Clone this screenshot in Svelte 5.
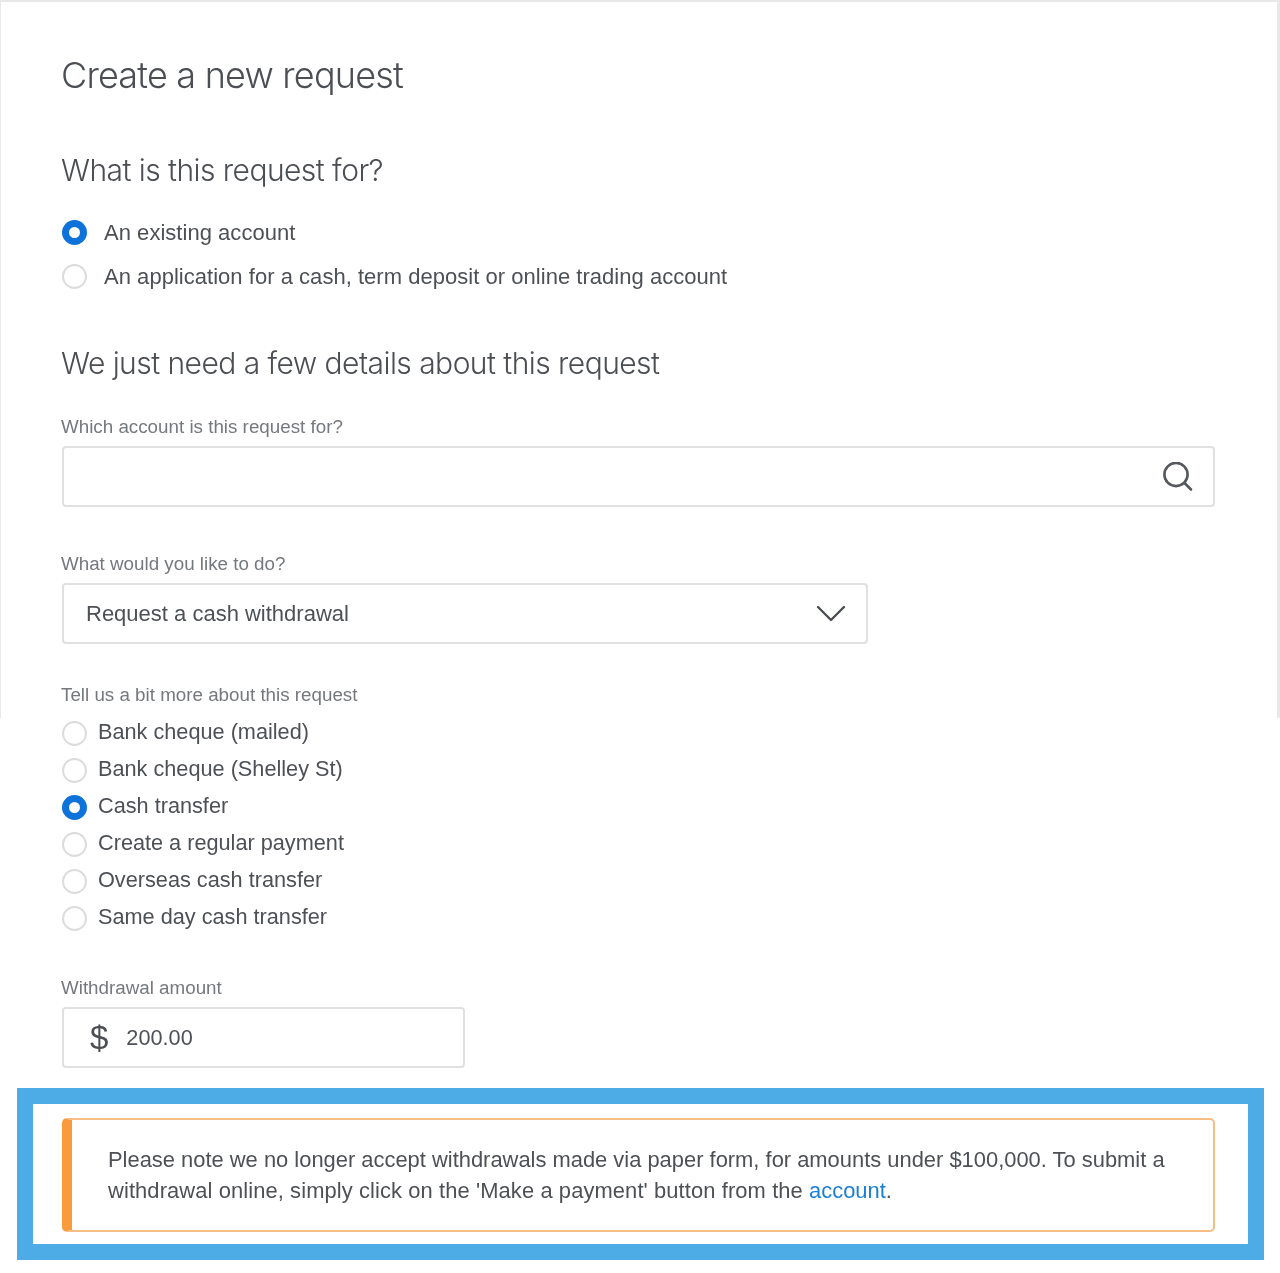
<script>
  const topOptions = [
    { label: 'An existing account', on: true },
    { label: 'An application for a cash, term deposit or online trading account', on: false }
  ];
  const detailOptions = [
    { label: 'Bank cheque (mailed)', on: false },
    { label: 'Bank cheque (Shelley St)', on: false },
    { label: 'Cash transfer', on: true },
    { label: 'Create a regular payment', on: false },
    { label: 'Overseas cash transfer', on: false },
    { label: 'Same day cash transfer', on: false }
  ];
</script>

<div class="page">
  <div class="form">
    <h1>Create a new request</h1>
    <h2 class="first">What is this request for?</h2>
    <div class="top-options">
      {#each topOptions as o}
        <div class="option top">
          <span class="radio" class:on={o.on}></span>
          <span class="top-text">{o.label}</span>
        </div>
      {/each}
    </div>
    <h2 class="second">We just need a few details about this request</h2>

    <div class="label account-label">Which account is this request for?</div>
    <div class="field wide">
      <svg class="search" width="30" height="30" viewBox="0 0 30 30" fill="none" stroke="#55585c" stroke-width="2.6">
        <circle cx="13" cy="12.5" r="11.6" />
        <path d="M21.5 21l6.5 6.5" stroke-linecap="round" />
      </svg>
    </div>

    <div class="label do-label">What would you like to do?</div>
    <div class="field select">
      <span>Request a cash withdrawal</span>
      <svg width="30" height="18" viewBox="0 0 30 18" fill="none" stroke="#4a4d52" stroke-width="2.4">
        <path d="M2 2l13 13L28 2" stroke-linecap="round" stroke-linejoin="round" />
      </svg>
    </div>

    <div class="label more-label">Tell us a bit more about this request</div>
    <div class="detail-options">
      {#each detailOptions as o}
        <div class="option detail">
          <span class="radio" class:on={o.on}></span>
          <span>{o.label}</span>
        </div>
      {/each}
    </div>

    <div class="label amount-label">Withdrawal amount</div>
    <div class="field amount">
      <span class="dollar">$</span>
      <span>200.00</span>
    </div>
  </div>

  <div class="highlight">
    <div class="alert">
      <p>Please note we no longer accept withdrawals made via paper form, for amounts under $100,000. To submit a <span class="tail">withdrawal online, simply click on the 'Make a payment' button from the{' '}</span><a href="#account">account</a>.</p>
    </div>
  </div>
</div>

<style>
  :global(body) {
    margin: 0;
    background: #fff;
  }
  .page {
    position: relative;
    width: 1280px;
    height: 1273px;
    box-sizing: border-box;
    overflow: hidden;
    border-top: 2px solid #e8e8e8;
    font-family: "Liberation Sans", Arial, sans-serif;
    color: #4d5055;
  }
  .page::before,
  .page::after {
    content: "";
    position: absolute;
    top: 0;
    height: 716px;
    background: #e8e8e8;
  }
  .page::before { left: 0; width: 1px; }
  .page::after { right: 0; width: 3px; }
  .form {
    padding-left: 61px;
    height: 1086px;
    box-sizing: border-box;
    filter: blur(0.45px);
  }
  h1 {
    margin: 0;
    padding-top: 50px;
    font: 300 36px/46px Inter, sans-serif;
    letter-spacing: -0.8px;
    color: #4b4e53;
  }
  h2 {
    margin: 0;
    font: 300 30px/40px Inter, sans-serif;
    letter-spacing: -0.55px;
    color: #4b4e53;
  }
  h2.first { margin-top: 52px; }
  h2.second { margin-top: 45px; }
  .top-options { margin-top: 20px; }
  .option {
    display: flex;
    align-items: center;
    color: #4d5055;
  }
  .option.top { height: 44px; gap: 17px; font-size: 22px; letter-spacing: 0.03px; }
  .top-text { padding-top: 2px; }
  .option.detail { height: 37px; gap: 11px; font-size: 21.7px; }
  .radio {
    flex: none;
    width: 25px;
    height: 25px;
    box-sizing: border-box;
    border: 2px solid #dcdcdc;
    border-radius: 50%;
    background: #fff;
    margin-left: 1px;
  }
  .detail .radio { margin-top: 4px; }
  .radio.on {
    border: 7.5px solid #0d72d9;
  }
  .label {
    font-size: 18.8px;
    line-height: 24px;
    color: #75787d;
  }
  .account-label { margin-top: 32px; }
  .do-label { margin-top: 45px; }
  .more-label { margin-top: 39px; }
  .amount-label { margin-top: 41px; }
  .field {
    display: flex;
    align-items: center;
    box-sizing: border-box;
    height: 61px;
    margin: 7px 0 0 1px;
    border: 2px solid #e0e0e0;
    border-radius: 4px;
    background: #fff;
    font-size: 22px;
    color: #4d5055;
  }
  .wide {
    width: 1153px;
    justify-content: flex-end;
    padding-right: 20px;
  }
  .select {
    width: 806px;
    justify-content: space-between;
    padding: 0 20px 0 22px;
  }
  .amount {
    width: 403px;
    padding-left: 26px;
    gap: 18px;
    font-size: 21.7px;
  }
  .dollar {
    font: 400 33px/1 "Liberation Sans", sans-serif;
    color: #4b4e53;
  }
  .detail-options { margin-top: 6px; }
  .highlight {
    position: absolute;
    left: 17px;
    top: 1086px;
    width: 1247px;
    height: 172px;
    box-sizing: border-box;
    border: 16px solid #4dabe6;
    background: #fff;
    padding: 14px 33px 0 29px;
  }
  .alert {
    box-sizing: border-box;
    height: 114px;
    border: 2px solid #f6bd84;
    border-left: 10px solid #f99a3c;
    border-radius: 5px;
    padding: 0 36px;
    display: flex;
    align-items: center;
    filter: blur(0.4px);
  }
  .alert p {
    margin: 0;
    font-size: 21.92px;
    line-height: 31px;
    color: #4d5055;
  }
  .tail { letter-spacing: 0.1px; }
  .alert a {
    color: #1a7fd6;
    text-decoration: none;
  }
</style>
